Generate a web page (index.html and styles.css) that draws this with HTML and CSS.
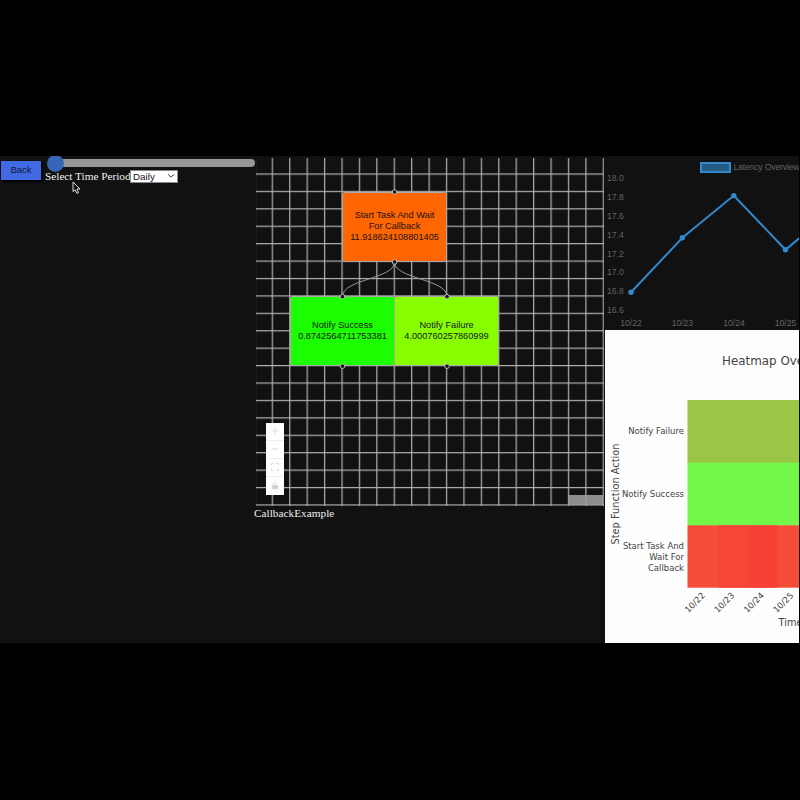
FILE: index.html
```
<!DOCTYPE html>
<html lang="en">
<head>
<meta charset="utf-8">
<title>CallbackExample</title>
<link rel="stylesheet" href="styles.css">
</head>
<body>
<main class="dashboard">
  <section class="controls">
    <button class="back">Back</button>
    <div class="period">
      <div class="slider"><span class="thumb"></span></div>
      <div class="period-row">
        <label>Select Time Period</label>
        <div class="select"><span>Daily</span><svg width="8" height="6" viewBox="0 0 8 6"><path d="M1.2 1.4 4 4.2 6.8 1.4" fill="none" stroke="#333" stroke-width="1"/></svg></div>
      </div>
    </div>
    <svg class="cursor" width="10" height="14" viewBox="0 0 10 14"><path d="M1 1V10.6L3.2 8.7 4.9 12.4 6.6 11.6 5 8H8Z" fill="#111" stroke="#ddd" stroke-width="1"/></svg>
  </section>

  <section class="flow">
    <div class="canvas">
      <svg class="layer" width="349" height="349" viewBox="255 157 349 349">
        <defs><pattern id="grid" x="271.7" y="173.4" width="17.42" height="17.42" patternUnits="userSpaceOnUse"><path d="M.65 0V17.42M0 .65H17.42" stroke="#b0b0b0" stroke-width="1.2"/></pattern></defs>
        <rect x="256" y="158" width="348" height="348" fill="url(#grid)"/>
        <g fill="none" stroke="#999" stroke-width="1"><path d="M394.5 262C394.5 279 342.5 279 342.5 296.5"/><path d="M394.5 262C394.5 279 447 279 447 296.5"/></g>
      </svg>
      <div class="node start">Start Task And Wait<br>For Callback<br>11.918624108801405</div>
      <div class="node success">Notify Success<br>0.8742564711753381</div>
      <div class="node failure">Notify Failure<br>4.000760257860999</div>
      <svg class="layer" width="349" height="349" viewBox="255 157 349 349">
        <g fill="#151515" stroke="#bbb" stroke-width="1"><circle cx="394.6" cy="192" r="2.3"/><circle cx="394.6" cy="262" r="2.3"/><circle cx="342.5" cy="296.6" r="2.3"/><circle cx="447" cy="296.6" r="2.3"/><circle cx="342.5" cy="366.2" r="2.3"/><circle cx="447" cy="366.2" r="2.3"/></g>
      </svg>
      <div class="zoom">
        <span><svg width="8" height="8" viewBox="0 0 8 8"><path d="M4 .5V7.5M.5 4H7.5"/></svg></span>
        <span><svg width="8" height="8" viewBox="0 0 8 8"><path d="M.5 4H7.5"/></svg></span>
        <span><svg width="8" height="8" viewBox="0 0 8 8"><path d="M.5 2.5V.5H2.5M5.5 .5H7.5V2.5M7.5 5.5V7.5H5.5M2.5 7.5H.5V5.5"/></svg></span>
        <span><svg width="8" height="8" viewBox="0 0 8 8"><path d="M2.2 3.5V2.3A1.8 1.8 0 0 1 5.7 2.3"/><path class="solid" d="M1.2 3.4H6.8V7H1.2Z"/></svg></span>
      </div>
      <div class="attribution"></div>
    </div>
    <div class="name">CallbackExample</div>
  </section>

  <section class="charts">
    <svg class="latency" width="194" height="174" viewBox="605 156 194 174">
      <rect x="701" y="163" width="29" height="9" fill="#245b80" stroke="#3289cd" stroke-width="2"/>
      <g class="chart-text">
        <text x="733.5" y="170.4" textLength="66">Latency Overview</text>
        <text x="607" y="181.4">18.0</text><text x="607" y="200.1">17.8</text><text x="607" y="218.9">17.6</text><text x="607" y="237.7">17.4</text><text x="607" y="256.5">17.2</text><text x="607" y="275.3">17.0</text><text x="607" y="294.1">16.8</text><text x="607" y="312.9">16.6</text>
        <g text-anchor="middle"><text x="631" y="326.3">10/22</text><text x="682.4" y="326.3">10/23</text><text x="734" y="326.3">10/24</text><text x="785.5" y="326.3">10/25</text></g>
      </g>
      <path d="M631 292.3 682.4 237.8 733.8 195.6 785.5 249.8 837 206" fill="none" stroke="#3289cd" stroke-width="2"/>
      <g fill="#3289cd"><circle cx="631" cy="292.3" r="2.7"/><circle cx="682.4" cy="237.8" r="2.7"/><circle cx="733.8" cy="195.6" r="2.7"/><circle cx="785.5" cy="249.8" r="2.7"/></g>
    </svg>
    <svg class="heatmap" width="194" height="313" viewBox="605 330 194 313">
      <text class="title" x="722" y="365.2">Heatmap Overview</text>
      <rect x="687.5" y="400" width="112" height="63" fill="#9bc544"/>
      <rect x="687.5" y="462.6" width="112" height="63" fill="#73f748"/>
      <rect x="687.5" y="525.3" width="112" height="62.4" fill="#f44d37"/>
      <rect x="718" y="525.3" width="30" height="62.4" fill="#f74636"/>
      <rect x="748" y="525.3" width="29.5" height="62.4" fill="#f94034"/>
      <g class="tick" text-anchor="end">
        <text x="684" y="434.2">Notify Failure</text>
        <text x="684" y="496.9">Notify Success</text>
        <text x="684" y="548.7">Start Task And</text><text x="684" y="559.7">Wait For</text><text x="684" y="570.7">Callback</text>
        <text transform="translate(705.5 596) rotate(-45)">10/22</text><text transform="translate(735 596) rotate(-45)">10/23</text><text transform="translate(764.5 596) rotate(-45)">10/24</text><text transform="translate(794 596) rotate(-45)">10/25</text>
      </g>
      <text class="axis" transform="translate(619.2 544.5) rotate(-90)" textLength="101">Step Function Action</text>
      <text class="axis" x="778.5" y="626.2">Time</text>
    </svg>
  </section>
</main>
</body>
</html>
```
FILE: styles.css
```
body {
  margin: 0;
  background: #000;
  overflow: hidden;
}
.dashboard {
  display: grid;
  grid-template-columns: 255px 349px 195px;
  width: 799px;
  height: 487px;
  margin-top: 156px;
  overflow: hidden;
  background: #111;
  color: #eee;
  font-family: "Liberation Serif", serif;
  font-size: 11.3px;
}
.controls {
  position: relative;
  display: flex;
  gap: 4px;
  align-items: flex-start;
}
.back {
  box-sizing: border-box;
  flex: none;
  width: 40px;
  height: 19px;
  margin: 4.5px 0 0 1px;
  padding: 0;
  border: 0;
  background: #4169e1;
  box-shadow: 1px 2px 2px #000;
  color: #0b1430;
  font: 9.3px "Liberation Sans", sans-serif;
}
.period {
  width: 211px;
  padding-top: 3px;
}
.slider {
  position: relative;
  height: 7.5px;
  margin-left: 4px;
  border-radius: 4px;
  background: #969696;
}
.thumb {
  position: absolute;
  left: -2px;
  top: -4.5px;
  width: 17px;
  height: 17px;
  border-radius: 50%;
  background: #3766b8;
}
.period-row {
  display: flex;
  align-items: center;
  margin-top: 3px;
  line-height: 13px;
}
.period-row label {
  width: 85px;
  letter-spacing: -.02px;
  white-space: nowrap;
}
.select {
  box-sizing: border-box;
  display: flex;
  align-items: center;
  justify-content: space-between;
  width: 48px;
  height: 13px;
  padding: 0 2px;
  border: 1px solid #888;
  background: #fff;
  color: #111;
  font: 9.8px "Liberation Sans", sans-serif;
}
.cursor {
  position: absolute;
  left: 72px;
  top: 25px;
}
.canvas {
  position: relative;
  height: 349px;
  margin-top: 1px;
  overflow: hidden;
}
.layer {
  position: absolute;
  inset: 0;
}
.node {
  position: absolute;
  box-sizing: border-box;
  width: 105px;
  height: 70px;
  border: 1px solid #aaa;
  border-radius: 2.5px;
  color: #151515;
  font: 9.2px/11px "Liberation Sans", sans-serif;
  text-align: center;
  white-space: nowrap;
}
.start {
  left: 87px;
  top: 35px;
  padding-top: 17px;
  background: #ff6500;
}
.success {
  left: 35px;
  top: 139px;
  padding-top: 23px;
  background: #1bff00;
}
.failure {
  left: 139px;
  top: 139px;
  padding-top: 23px;
  background: #88ff00;
}
.zoom {
  position: absolute;
  left: 11px;
  top: 265.5px;
  display: grid;
  grid-template-rows: repeat(4, 1fr);
  width: 18px;
  height: 72.5px;
  background: #fefefe;
}
.zoom span {
  display: grid;
  place-items: center;
  border-bottom: 1px solid #eee;
}
.zoom span:last-child {
  border: 0;
}
.zoom path {
  fill: none;
  stroke: #ddd;
}
.zoom .solid {
  fill: #ccc;
}
.attribution {
  position: absolute;
  right: 1px;
  bottom: 1px;
  width: 35px;
  height: 10px;
  background: rgba(155, 155, 155, .9);
}
.name {
  margin-left: -1px;
  line-height: 14px;
}
.charts {
  display: flex;
  flex-direction: column;
  padding-left: 1px;
}
.charts svg {
  display: block;
  flex: none;
}
.heatmap {
  background: #fdfdfd;
}
.chart-text {
  fill: #636363;
  font: 8.6px "Liberation Sans", sans-serif;
}
.title {
  fill: #444;
  font: 11.9px "DejaVu Sans", sans-serif;
}
.tick {
  fill: #444;
  font: 8.5px "DejaVu Sans", sans-serif;
}
.axis {
  fill: #444;
  font: 9.8px "DejaVu Sans", sans-serif;
}
```
